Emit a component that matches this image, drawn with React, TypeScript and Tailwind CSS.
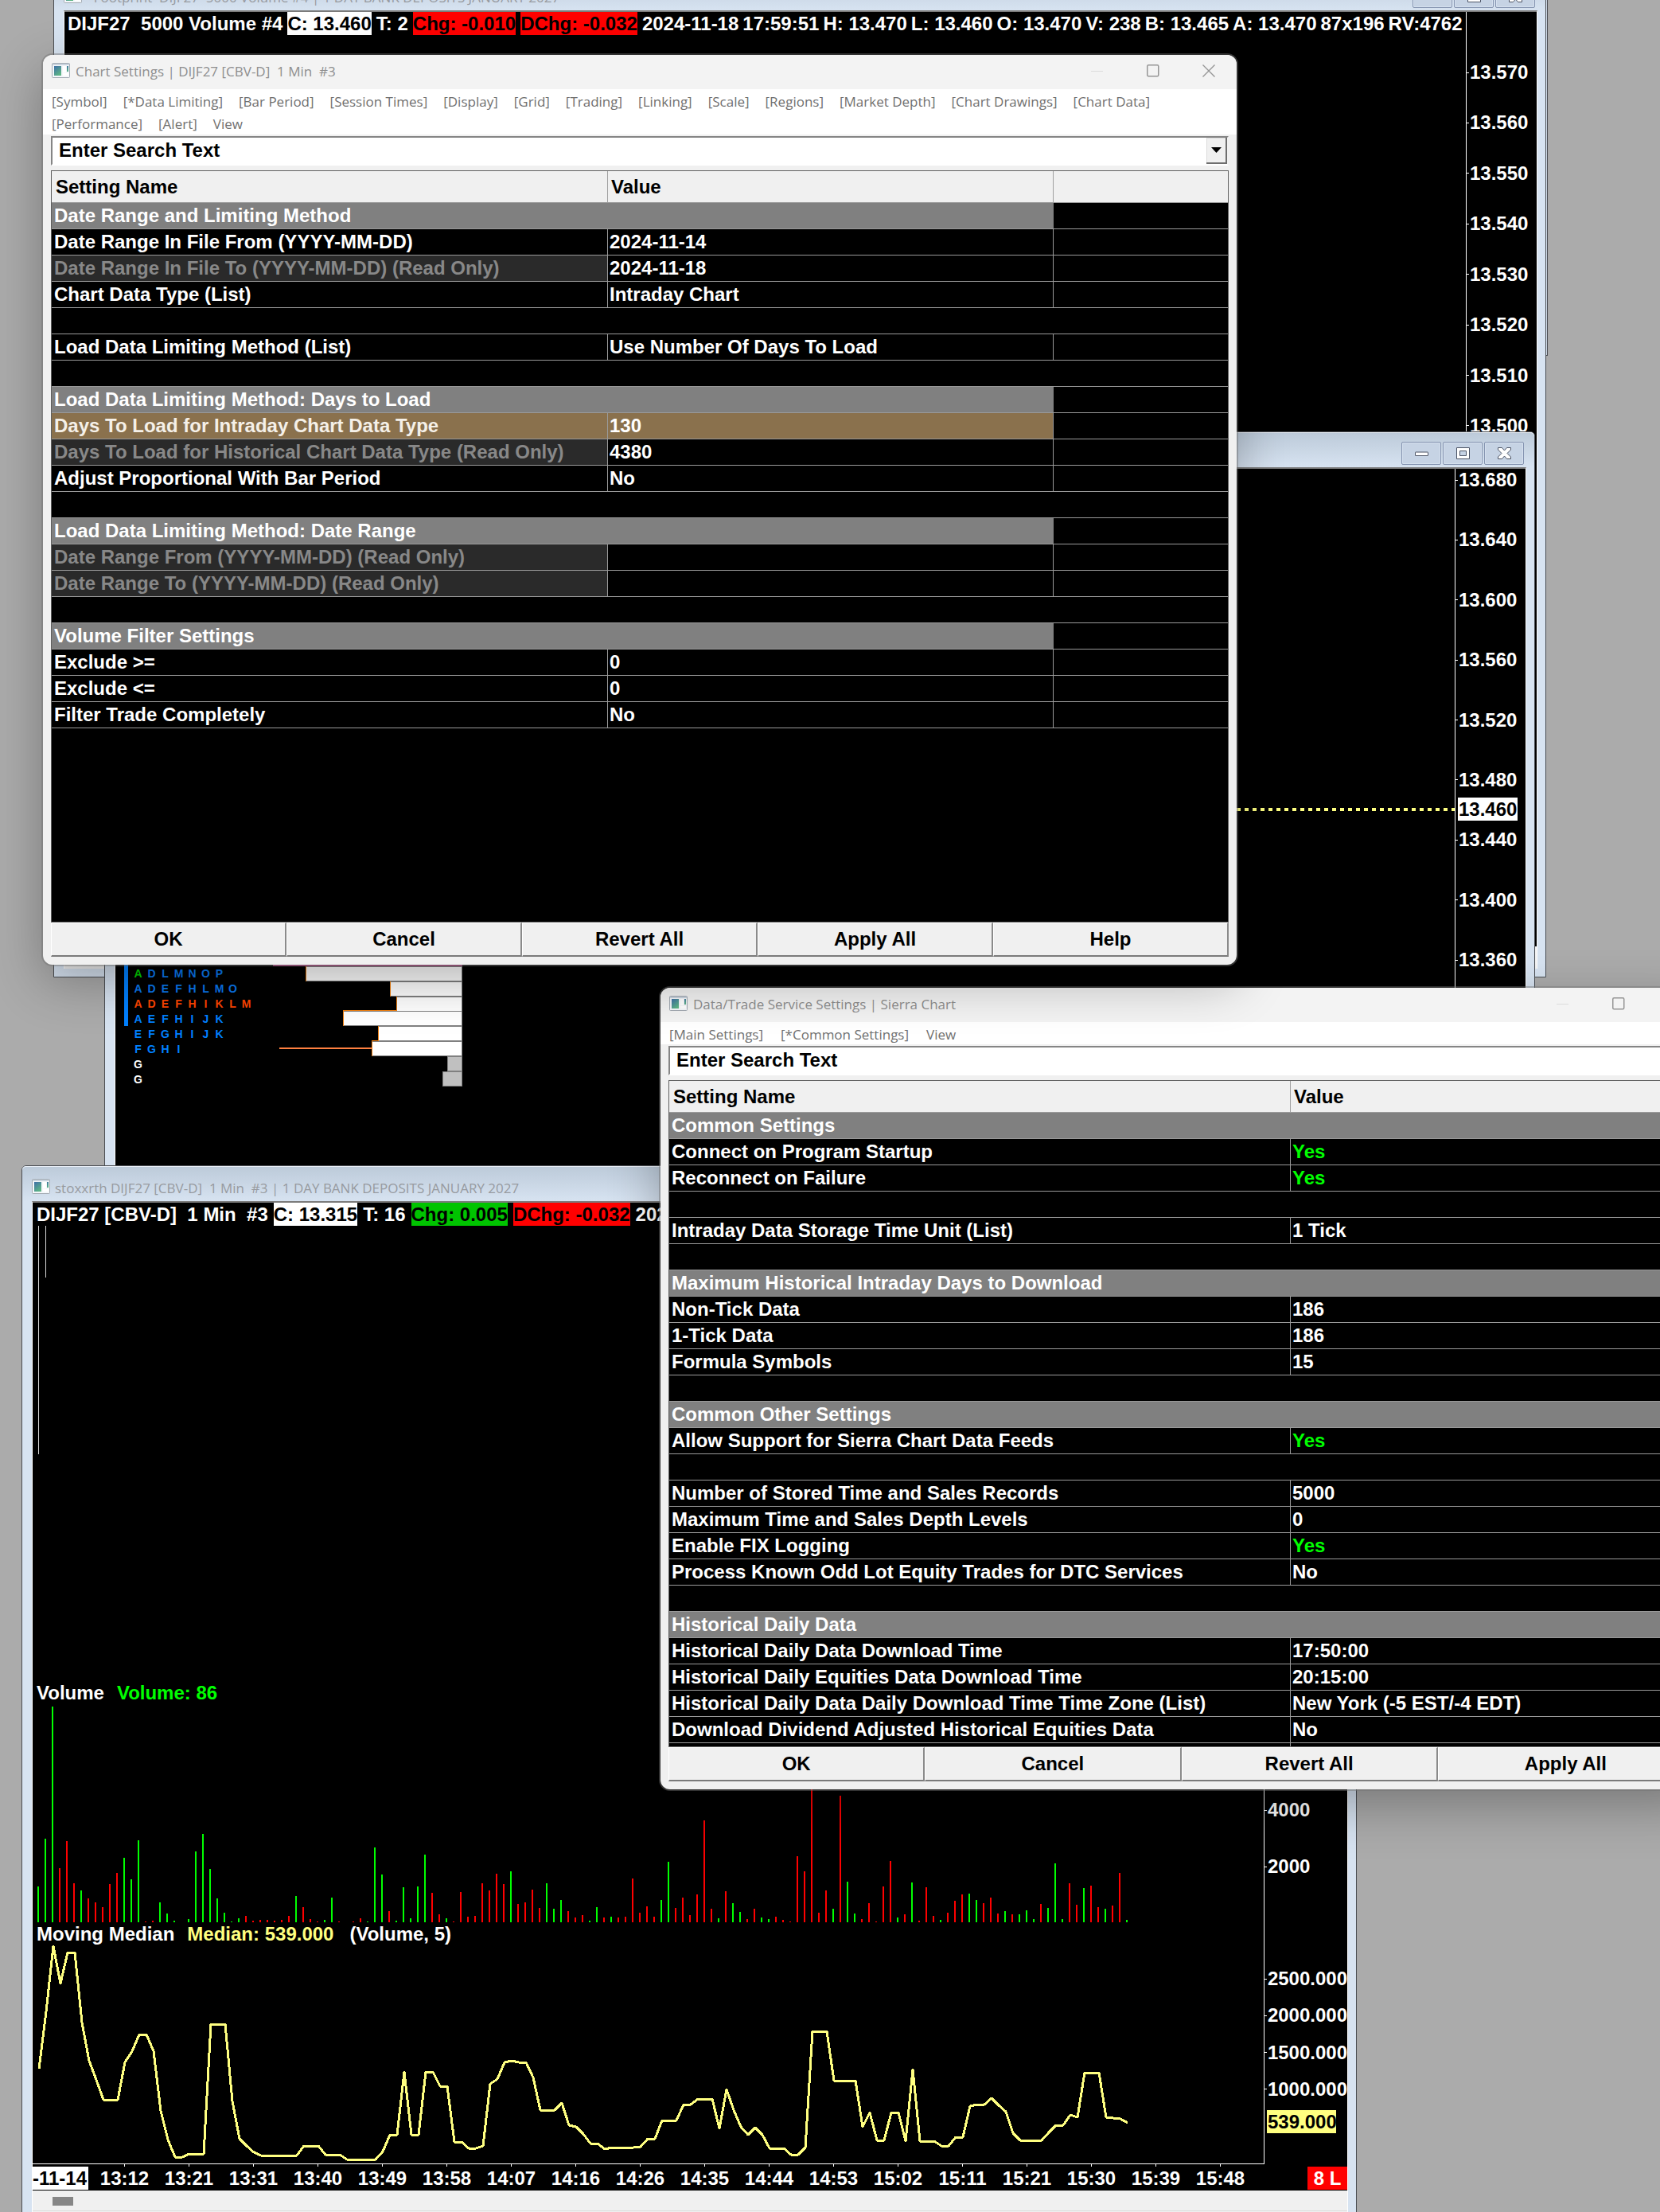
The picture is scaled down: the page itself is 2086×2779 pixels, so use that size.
import React from "react";

type Row =
  | { kind: "head"; name: string }
  | { kind: "blank" }
  | { kind: "item"; name: string; value: string; tone?: "yes" | "readonly" | "selected" };

const head = (name: string): Row => ({ kind: "head", name });
const blank: Row = { kind: "blank" };
const item = (name: string, value: string, tone?: "yes" | "readonly" | "selected"): Row => ({
  kind: "item",
  name,
  value,
  tone,
});

const chartRows: Row[] = [
  head("Date Range and Limiting Method"),
  item("Date Range In File From (YYYY-MM-DD)", "2024-11-14"),
  item("Date Range In File To (YYYY-MM-DD) (Read Only)", "2024-11-18", "readonly"),
  item("Chart Data Type (List)", "Intraday Chart"),
  blank,
  item("Load Data Limiting Method (List)", "Use Number Of Days To Load"),
  blank,
  head("Load Data Limiting Method: Days to Load"),
  item("Days To Load for Intraday Chart Data Type", "130", "selected"),
  item("Days To Load for Historical Chart Data Type (Read Only)", "4380", "readonly"),
  item("Adjust Proportional With Bar Period", "No"),
  blank,
  head("Load Data Limiting Method: Date Range"),
  item("Date Range From (YYYY-MM-DD) (Read Only)", "", "readonly"),
  item("Date Range To (YYYY-MM-DD) (Read Only)", "", "readonly"),
  blank,
  head("Volume Filter Settings"),
  item("Exclude >=", "0"),
  item("Exclude <=", "0"),
  item("Filter Trade Completely", "No"),
];

const serviceRows: Row[] = [
  head("Common Settings"),
  item("Connect on Program Startup", "Yes", "yes"),
  item("Reconnect on Failure", "Yes", "yes"),
  blank,
  item("Intraday Data Storage Time Unit (List)", "1 Tick"),
  blank,
  head("Maximum Historical Intraday Days to Download"),
  item("Non-Tick Data", "186"),
  item("1-Tick Data", "186"),
  item("Formula Symbols", "15"),
  blank,
  head("Common Other Settings"),
  item("Allow Support for Sierra Chart Data Feeds", "Yes", "yes"),
  blank,
  item("Number of Stored Time and Sales Records", "5000"),
  item("Maximum Time and Sales Depth Levels", "0"),
  item("Enable FIX Logging", "Yes", "yes"),
  item("Process Known Odd Lot Equity Trades for DTC Services", "No"),
  blank,
  head("Historical Daily Data"),
  item("Historical Daily Data Download Time", "17:50:00"),
  item("Historical Daily Equities Data Download Time", "20:15:00"),
  item("Historical Daily Data Daily Download Time Time Zone (List)", "New York (-5 EST/-4 EDT)"),
  item("Download Dividend Adjusted Historical Equities Data", "No"),
  item("", ""),
];

// Bar heights; a negative value is a down (red) bar.
const volume = [
  45, 105, 271, -68, -102, -49, 40, -30, -25, -19, -48, -62, 81, 54, 103, -1, -2, 25, 11, 2, 0, 4, 89, 111, 67, 30, 12,
  1, 5, -8, -2, -3, -3, -2, -3, -8, 33, -19, -4, -1, 3, 31, -1, 0, -1, -5, 1, 94, 60, -14, 2, 44, 5, 45, 85, -37, -10,
  5, -1, -38, -7, -8, -49, -40, -61, -48, 64, -23, -25, -41, -18, 49, 17, 28, -14, -6, -9, 2, 19, -6, 7, -6, -7, -55,
  -12, -20, -7, 28, 76, -18, -31, -9, -35, -128, -17, 5, -39, 24, 13, -4, -17, 6, 4, -7, -3, -1, -83, -64, -200, -12,
  -40, 17, -159, 51, 11, -4, -24, -1, -45, -77, 6, -10, 50, -2, -44, -8, 3, -12, -27, -35, 36, 28, -24, -31, -11, 14,
  -10, 10, 15, 4, -23, 18, 74, 4, -49, -22, 43, -46, -19, 17, -21, -62, 3,
];

const median = [
  184, 112, 30, 77, 38, 38, 126, 174, 198, 223, 223, 223, 176, 162, 141, 141, 162, 237, 273, 295, 295, 291, 291, 291,
  128, 128, 128, 225, 272, 281, 289, 293, 293, 293, 294, 293, 293, 281, 281, 281, 292, 292, 292, 298, 298, 298, 298,
  298, 288, 267, 267, 188, 267, 267, 188, 188, 206, 206, 276, 276, 284, 284, 281, 203, 197, 176, 174, 176, 176, 195,
  236, 236, 236, 227, 255, 257, 266, 278, 278, 285, 283, 284, 283, 283, 282, 272, 272, 249, 249, 249, 229, 229, 222,
  222, 222, 259, 210, 236, 257, 267, 258, 267, 284, 284, 284, 292, 292, 283, 137, 137, 137, 199, 199, 199, 199, 257,
  239, 274, 274, 239, 239, 275, 185, 275, 275, 275, 281, 281, 270, 270, 231, 229, 229, 221, 230, 238, 265, 274, 274,
  274, 274, 264, 255, 255, 242, 245, 189, 189, 189, 245, 246, 247, 252,
];

const times = [
  "13:12", "13:21", "13:31", "13:40", "13:49", "13:58", "14:07", "14:16", "14:26",
  "14:35", "14:44", "14:53", "15:02", "15:11", "15:21", "15:30", "15:39", "15:48",
];

const quote = [
  "2024-11-18", "17:59:51", "H: 13.470", "L: 13.460", "O: 13.470", "V: 238", "B: 13.465", "A: 13.470", "87x196",
  "RV:4762",
];

const profile = [
  { letters: "ADLMNOP", color: "text-[#0a78f0]", first: "text-[#00d000]" },
  { letters: "ADEFHLMO", color: "text-[#0a78f0]" },
  { letters: "ADEFHIKLM", color: "text-[#ff4500]" },
  { letters: "AEFHIJK", color: "text-[#0080ff]" },
  { letters: "EFGHIJK", color: "text-[#0080ff]" },
  { letters: "FGHI", color: "text-[#0080ff]" },
  { letters: "G", color: "text-white" },
  { letters: "G", color: "text-white" },
];

const profileBars = [
  { x: 384, y: 1214, fill: "#fff" },
  { x: 490, y: 1233, fill: "#fff" },
  { x: 498, y: 1252, fill: "#fff" },
  { x: 431, y: 1270, fill: "#fff" },
  { x: 475, y: 1289, fill: "#fff" },
  { x: 467, y: 1308, fill: "#fff" },
  { x: 562, y: 1327, fill: "#c0c0c0" },
  { x: 556, y: 1346, fill: "#c0c0c0" },
];

function AppIcon() {
  return (
    <svg className="h-5 w-6 shrink-0" viewBox="0 0 24 20" aria-hidden="true">
      <defs>
        <linearGradient id="app-pane" x1="0" y1="0" x2="0.6" y2="1">
          <stop offset="0" stopColor="#3f6fa8" />
          <stop offset="1" stopColor="#5cb585" />
        </linearGradient>
      </defs>
      <rect x="0.5" y="0.5" width="22" height="18" rx="1" fill="#f4f7fa" stroke="#a3abb3" />
      <rect x="1" y="1" width="21" height="2" fill="#c9d3de" />
      <rect x="3" y="4" width="9" height="12" fill="url(#app-pane)" />
      <rect x="14" y="4" width="4" height="8" fill="#fff" />
      <rect x="19" y="4" width="2" height="7" fill="url(#app-pane)" />
      <rect x="14" y="13" width="7" height="3" fill="#fff" />
    </svg>
  );
}

function CaptionButton({ label, children }: { label: string; children: React.ReactNode }) {
  return (
    <button
      aria-label={label}
      className="flex h-[29px] w-[50px] items-center justify-center rounded-[2px] border border-[#8594b0] bg-[#c6d3e4] shadow-[inset_0_0_0_1px_#d5e0ee]"
    >
      <svg className="h-[19px] w-[19px]" viewBox="0 0 19 19" fill="none" aria-hidden="true">
        {children}
      </svg>
    </button>
  );
}

function ChartWindow({
  className,
  title,
  buttons,
  children,
}: {
  className: string;
  title?: string;
  buttons?: boolean;
  children: React.ReactNode;
}) {
  return (
    <section
      className={
        "absolute flex flex-col rounded-t-[6px] border border-[#4a4d52] bg-[#d7e3f1] pr-[10px] pb-[10px] pl-[12px] " +
        className
      }
    >
      <header className="-mr-[10px] -ml-[12px] flex h-[44px] shrink-0 rounded-t-[5px] bg-linear-to-b from-[#bccad9] to-[#d7e3f1] pr-[13px] pl-[12px] shadow-[inset_0_1px_0_#e8eef6]">
        <div className="mt-[15px] flex h-[22px] min-w-0 flex-1 items-center gap-[5px]">
          <AppIcon />
          {title && (
            <h2 className="mt-1 font-['Open_Sans',sans-serif] text-[17px] leading-6 whitespace-pre text-[#979a9f]">
              {title}
            </h2>
          )}
        </div>
        {buttons && (
          <div className="mt-[12px] flex gap-[2px]">
            <CaptionButton label="Minimize">
              <rect x="1.5" y="8" width="16" height="4.5" rx="0.5" fill="#fff" stroke="#4b5364" />
            </CaptionButton>
            <CaptionButton label="Maximize">
              <path
                fillRule="evenodd"
                d="M1.5 2.5h16v14h-16zM5.5 6.500v6h8v-6z"
                fill="#fff"
                stroke="#4b5364"
              />
            </CaptionButton>
            <CaptionButton label="Close">
              <path
                d="M1.500 2.500h5l3 3.500 3-3.500h5v2.500l-4.500 4.500 4.500 4.500v2.500h-5l-3-3.500-3 3.500h-5v-2.500l4.500-4.500-4.500-4.500z"
                fill="#fff"
                stroke="#4b5364"
                strokeLinejoin="round"
              />
            </CaptionButton>
          </div>
        )}
      </header>
      <div className="flex min-h-0 flex-1 flex-col border-t-2 border-r border-l border-t-[#7b7b7b] border-r-white border-l-white bg-black text-2xl font-bold text-white">
        {children}
      </div>
    </section>
  );
}

function AxisLabel({ children }: { children: React.ReactNode }) {
  return (
    <div className="flex h-7 items-center gap-px leading-7">
      <span className="h-px w-[3px] bg-white" />
      {children}
    </div>
  );
}

function SettingsTable({ rows, wide }: { rows: Row[]; wide?: boolean }) {
  const line = "border-b border-b-[#9a9a9a] ";
  const cell = "h-[33px] overflow-hidden py-0 pr-[2px] ";
  return (
    <table className="w-full table-fixed border-separate border-spacing-0 text-left whitespace-nowrap">
      <colgroup>
        <col className={wide ? "w-[781px]" : "w-[699px]"} />
        <col className={wide ? "" : "w-[560px]"} />
        {!wide && <col />}
      </colgroup>
      <thead>
        <tr className="bg-[#f0f0f0] text-black">
          <th className={line + "h-10 border-r border-r-[#a0a0a0] py-0 pl-[5px]"}>Setting Name</th>
          <th className={line + "h-10 px-1 py-0 " + (wide ? "" : "border-r border-r-[#a0a0a0]")}>Value</th>
          {!wide && <th className={line + "h-10"} aria-label="Notes" />}
        </tr>
      </thead>
      <tbody>
        {rows.map((row, i) => {
          if (row.kind === "blank") {
            return (
              <tr key={i}>
                <td colSpan={wide ? 2 : 3} className={line + cell} />
              </tr>
            );
          }
          if (row.kind === "head") {
            return (
              <tr key={i}>
                <td colSpan={2} className={line + cell + "bg-[#808080] pl-[3px]"}>
                  {row.name}
                </td>
                {!wide && <td className={line + cell} />}
              </tr>
            );
          }
          const selected = row.tone === "selected";
          const readonly = row.tone === "readonly";
          return (
            <tr key={i} className={selected ? "bg-[#8a714d]" : ""}>
              <td
                className={
                  line +
                  cell +
                  "border-r border-r-[#9a9a9a] pl-[3px] " +
                  (readonly ? "bg-[#2a2a2a] text-[#888888]" : selected ? "text-[#f5f0e8]" : "")
                }
              >
                {row.name}
              </td>
              <td
                className={
                  line +
                  cell +
                  "pl-[2px] " +
                  (wide ? "" : "border-r border-r-[#9a9a9a] ") +
                  (row.tone === "yes" ? "text-[#00ff00]" : "")
                }
              >
                {row.value}
              </td>
              {!wide && <td className={line + cell + "bg-black"} />}
            </tr>
          );
        })}
      </tbody>
    </table>
  );
}

function Dialog({
  className,
  id,
  title,
  menu,
  menuClass,
  rows,
  wide,
  actions,
  gridHeight,
}: {
  className: string;
  id: string;
  title: string;
  menu: string[];
  menuClass: string;
  rows: Row[];
  wide?: boolean;
  actions: string[];
  gridHeight: string;
}) {
  return (
    <section
      role="dialog"
      aria-label={title}
      className={
        "absolute flex flex-col overflow-hidden rounded-xl bg-[#f0f0f0] text-2xl font-bold text-black shadow-[0_0_0_2px_rgba(112,112,112,0.45),0_20px_64px_rgba(0,0,0,0.3)] " +
        className
      }
    >
      <header className="flex h-[43px] items-center justify-between bg-[#f3f3f3] pl-[11px] font-['Open_Sans',sans-serif] text-[17px] font-normal text-[#8e8e8e]">
        <div className="-mt-1 flex items-center gap-[6px]">
          <AppIcon />
          <h2 className="mt-[2px] leading-6 whitespace-pre">{title}</h2>
        </div>
        <div className="-mt-1 flex gap-[38px] pr-[19px]">
          <button aria-label="Minimize" className="flex h-8 w-8 items-center justify-center">
            <svg className="h-4 w-4" viewBox="0 0 16 16" aria-hidden="true">
              <path d="M0 8.500h15" stroke="#dcdcdc" />
            </svg>
          </button>
          <button aria-label="Maximize" className="flex h-8 w-8 items-center justify-center">
            <svg className="h-4 w-4" viewBox="0 0 16 16" fill="none" aria-hidden="true">
              <rect x="0.750" y="0.750" width="14" height="14" rx="1.500" stroke="#959595" strokeWidth="1.500" />
            </svg>
          </button>
          <button aria-label="Close" className="flex h-8 w-8 items-center justify-center">
            <svg className="h-4 w-4" viewBox="0 0 16 16" fill="none" aria-hidden="true">
              <path d="M0.500 0.500l15 15M15.500 0.500l-15 15" stroke="#959595" strokeWidth="1.300" />
            </svg>
          </button>
        </div>
      </header>
      <nav
        className={
          "flex flex-wrap bg-white px-[11px] font-['Open_Sans',sans-serif] text-[17px] leading-6 font-normal text-[#707070] " +
          menuClass
        }
      >
        {menu.map((m) => (
          <button key={m} className="h-7 pt-[3px]">
            {m}
          </button>
        ))}
      </nav>
      <div className="flex flex-col px-[10px] pt-[2px] pb-[10px]">
        <div className="flex h-[37px] border-2 border-t-[#858585] border-r-[#f0f0f0] border-b-white border-l-[#858585] bg-white">
          <input
            id={id}
            aria-label="Search"
            defaultValue="Enter Search Text"
            className="min-w-0 flex-1 bg-transparent px-2 pb-[2px] outline-none"
          />
          <button
            aria-label="Show search history"
            className="flex w-[26px] items-center justify-center border-r-2 border-b-2 border-r-[#6e6e6e] border-b-[#6e6e6e] bg-[#f0f0f0] shadow-[inset_1px_1px_0_#dcdcdc]"
          >
            <svg className="h-[7px] w-[13px]" viewBox="0 0 13 7" aria-hidden="true">
              <path d="M0 0h13L6.500 7z" fill="#000" />
            </svg>
          </button>
        </div>
        <div
          className={
            "mt-[6px] overflow-hidden border-t border-r border-l border-[#5f5f5f] bg-black text-white " + gridHeight
          }
        >
          <SettingsTable rows={rows} wide={wide} />
        </div>
        <div className="flex border-t border-[#6b6b6b]">
          {actions.map((a) => (
            <button
              key={a}
              className="h-[43px] flex-1 border-t border-r-2 border-b-2 border-l border-t-white border-r-[#8a8a8a] border-b-[#7a7a7a] border-l-white bg-[#f0f0f0] leading-8"
            >
              {a}
            </button>
          ))}
        </div>
      </div>
    </section>
  );
}

function Mark({ tone, children }: { tone: "white" | "red" | "green"; children: React.ReactNode }) {
  const bg = tone === "white" ? "bg-white" : tone === "red" ? "bg-[#ff0000]" : "bg-[#00c400]";
  return <span className={"h-[29px] text-black " + bg}>{children}</span>;
}

export default function App() {
  return (
    <main className="relative h-screen w-full overflow-hidden bg-[#ababab] font-['Liberation_Sans',Arial,sans-serif]">
      <div className="absolute -top-8 left-[200px] h-[479px] w-[1745px] border border-[#4a4d52] bg-[#d7e3f1]" />

      <ChartWindow
        className="-top-8 left-[67px] h-[1260px] w-[1876px]"
        title="  Footprint  DIJF27  5000 Volume #4 | 1 DAY BANK DEPOSITS JANUARY 2027"
        buttons
      >
        <div className="flex min-h-0 flex-1">
          <div className="flex h-[29px] min-w-0 flex-1 gap-[6px] pl-1 leading-[29px] whitespace-pre">
            <span>{"DIJF27  5000 Volume #4"}</span>
            <Mark tone="white">C: 13.460</Mark>
            <span>T: 2</span>
            <Mark tone="red">Chg: -0.010</Mark>
            <Mark tone="red">DChg: -0.032</Mark>
            <div className="flex gap-[5px]">
              {quote.map((q) => (
                <span key={q}>{q}</span>
              ))}
            </div>
          </div>
          <div className="w-[89px] border-l border-white">
            <div className="mt-[62px] flex h-[472px] flex-col justify-between">
              {["13.570", "13.560", "13.550", "13.540", "13.530", "13.520", "13.510", "13.500"].map((v) => (
                <AxisLabel key={v}>{v}</AxisLabel>
              ))}
            </div>
          </div>
        </div>
        <div className="h-7 bg-[#f0f0f0]" />
      </ChartWindow>

      <ChartWindow className="top-[542px] left-[131px] h-[1158px] w-[1798px]" buttons>
        <div className="flex min-h-0 flex-1">
          <div className="relative min-w-0 flex-1 pt-[625px] pl-5">
            <svg className="absolute inset-0 h-full w-full" aria-hidden="true">
              <g transform="translate(-145 -589)">
                <rect x="156" y="900" width="5" height="389" fill="#0080ff" />
                <rect x="343" y="1211" width="238" height="3" fill="#c0408a" />
                {profileBars.map((b, i) => (
                  <g key={i}>
                    <rect x={b.x} y={b.y} width={581 - b.x} height="18" fill={b.fill} />
                    <path d={`M${b.x} ${b.y + 18.500}H581M${b.x} ${b.y + 0.500}H581M580.500 ${b.y}v19`} stroke="#808080" />
                    <path d={`M${b.x + 0.500} ${b.y}v19`} stroke={i < 6 ? "#f08010" : "#808080"} />
                  </g>
                ))}
                <path d="M431 1269.500H498M467 1307.500H475" stroke="#f08010" />
                <path d="M351 1317H467" stroke="#ff8040" strokeWidth="2" />
                <path d="M154 1017H1828" stroke="#ffff80" strokeWidth="4" strokeDasharray="5 5" />
              </g>
            </svg>
            {profile.map((p, i) => (
              <div key={i} className={"flex h-[19px] text-[14px] leading-[19px] " + p.color}>
                {p.letters.split("").map((c, k) => (
                  <span key={k} className={"w-[17px] text-center " + (k === 0 && p.first ? p.first : "")}>
                    {c}
                  </span>
                ))}
              </div>
            ))}
          </div>
          <div className="relative w-[89px] border-l border-white">
            <div className="flex h-[631px] flex-col justify-between">
              {["13.680", "13.640", "13.600", "13.560", "13.520", "13.480", "13.440", "13.400", "13.360"].map((v) => (
                <AxisLabel key={v}>{v}</AxisLabel>
              ))}
            </div>
            <span className="absolute top-[413px] left-[3px] h-[29px] bg-white px-px leading-[29px] text-black">
              13.460
            </span>
          </div>
        </div>
      </ChartWindow>

      <ChartWindow
        className="top-[1464px] left-[27px] h-[1330px] w-[1678px]"
        title="stoxxrth DIJF27 [CBV-D]  1 Min  #3 | 1 DAY BANK DEPOSITS JANUARY 2027"
      >
        <div className="flex h-[1208px]">
          <div className="min-w-0 flex-1 border-b border-white">
            <div className="flex h-[29px] gap-[7px] pl-[5px] leading-[29px] whitespace-pre">
              <span>{"DIJF27 [CBV-D]  1 Min  #3"}</span>
              <Mark tone="white">C: 13.315</Mark>
              <span>T: 16</span>
              <Mark tone="green">Chg: 0.005</Mark>
              <Mark tone="red">DChg: -0.032</Mark>
              <span>2024-11-14</span>
            </div>
            <svg className="block h-[572px] w-full" aria-hidden="true">
              <path d="M7.500 0V287M16.500 0V65" stroke="#d8d8d8" shapeRendering="crispEdges" />
            </svg>
            <div className="flex h-[30px] gap-4 pl-[5px] leading-[30px]">
              <span>Volume</span>
              <span className="text-[#00ff00]">Volume: 86</span>
            </div>
            <svg className="block h-[273px] w-full" aria-hidden="true">
              {volume.map((v, i) => (
                <rect
                  key={i}
                  x={6 + 9 * i}
                  y={273 - Math.abs(v)}
                  width="2"
                  height={Math.abs(v)}
                  fill={v < 0 ? "#ff0000" : "#00ff00"}
                />
              ))}
            </svg>
            <div className="flex h-[30px] gap-4 pl-[5px] leading-[30px]">
              <span>Moving Median</span>
              <span className="text-[#ffff80]">Median: 539.000</span>
              <span className="pl-1">(Volume, 5)</span>
            </div>
            <svg className="block h-[273px] w-full overflow-visible" aria-hidden="true">
              <polyline
                points={median.map((y, i) => `${8 + 9 * i},${y - 30}`).join(" ")}
                fill="none"
                stroke="#ffff80"
                strokeWidth="3"
                strokeLinejoin="round"
                shapeRendering="crispEdges"
              />
            </svg>
          </div>
          <div className="w-[105px] border-l border-white pt-[749px]">
            <div className="flex h-[99px] flex-col justify-between">
              <AxisLabel>4000</AxisLabel>
              <AxisLabel>2000</AxisLabel>
            </div>
            <div className="mt-[113px] flex h-[167px] flex-col justify-between">
              {["2500.000", "2000.000", "1500.000", "1000.000"].map((v) => (
                <AxisLabel key={v}>{v}</AxisLabel>
              ))}
            </div>
            <div className="mt-3 ml-[3px] h-[29px] w-[87px] bg-[#ffff80] px-px leading-[29px] text-black">539.000</div>
          </div>
        </div>
        <div className="flex h-[33px] items-start leading-[29px]">
          <span className="mt-[3px] mr-[5px] h-[29px] w-[70px] bg-white whitespace-nowrap text-black">-11-14</span>
          {times.map((t) => (
            <span key={t} className="flex w-[81px] flex-col items-center">
              <i className="h-[3px] w-px bg-white" />
              {t}
            </span>
          ))}
          <span className="mt-[3px] ml-auto h-[29px] w-[50px] bg-[#ff0000] text-center">8 L</span>
        </div>
        <div className="h-[26px] border-b border-[#dcdcdc] bg-[#f0f0f0] pt-2 pl-[25px]">
          <div className="h-[11px] w-[26px] bg-[#868686]" />
        </div>
        <div className="flex-1 bg-[#f0f0f0]" />
      </ChartWindow>

      <Dialog
        className="top-[1241px] left-[830px] w-[1309px]"
        id="service-search"
        title="Data/Trade Service Settings | Sierra Chart"
        menu={["[Main Settings]", "[*Common Settings]", "View"]}
        menuClass="gap-x-[22px]"
        rows={serviceRows}
        wide
        actions={["OK", "Cancel", "Revert All", "Apply All"]}
        gridHeight="h-[837px]"
      />

      <Dialog
        className="top-[69px] left-[54px] w-[1500px]"
        id="chart-search"
        title="Chart Settings | DIJF27 [CBV-D]  1 Min  #3"
        menu={[
          "[Symbol]", "[*Data Limiting]", "[Bar Period]", "[Session Times]", "[Display]", "[Grid]", "[Trading]",
          "[Linking]", "[Scale]", "[Regions]", "[Market Depth]", "[Chart Drawings]", "[Chart Data]",
          "[Performance]", "[Alert]", "View",
        ]}
        menuClass="gap-x-5 pb-px"
        rows={chartRows}
        actions={["OK", "Cancel", "Revert All", "Apply All", "Help"]}
        gridHeight="h-[944px]"
      />
    </main>
  );
}
